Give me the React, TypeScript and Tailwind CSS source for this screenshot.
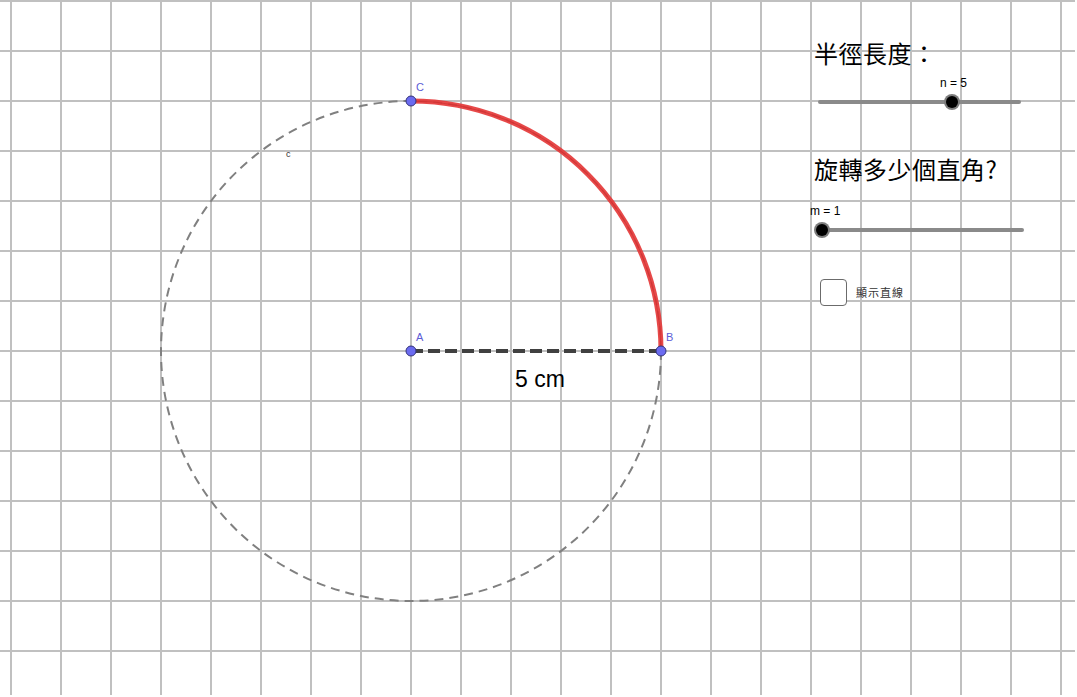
import React from 'react';

const W = 1075;
const H = 695;

const cx = 411;
const cy = 351;
const r = 250;

const pointColor = '#6b6bf0';
const labelColor = '#5c5cd6';

function Grid() {
  const xs: number[] = [];
  for (let x = 11; x < W; x += 50) xs.push(x);
  const ys: number[] = [];
  for (let y = 1; y < H; y += 50) ys.push(y);
  return (
    <g stroke="#c0c0c0" strokeWidth={2}>
      {xs.map((x) => (
        <line key={'v' + x} x1={x} y1={0} x2={x} y2={H} />
      ))}
      {ys.map((y) => (
        <line key={'h' + y} x1={0} y1={y} x2={W} y2={y} />
      ))}
    </g>
  );
}

function Point({ x, y, label }: { x: number; y: number; label: string }) {
  return (
    <g>
      <circle cx={x} cy={y} r={5} fill={pointColor} stroke="#33337a" strokeWidth={1} />
      <text x={x + 5} y={y - 10} fontSize={11} fill={labelColor} fontFamily="Liberation Sans, Arial, sans-serif">
        {label}
      </text>
    </g>
  );
}

function Drawing() {
  const arc = `M ${cx} ${cy - r} A ${r} ${r} 0 0 1 ${cx + r} ${cy}`;
  return (
    <svg width={W} height={H} className="block">
      <rect x={0} y={0} width={W} height={H} fill="#ffffff" />
      <Grid />
      {/* circle c */}
      <circle cx={cx} cy={cy} r={r} fill="none" stroke="#808080" strokeWidth={2} strokeDasharray="9 6" />
      <text x={286} y={157} fontSize={9} fill="#333" fontFamily="Liberation Sans, Arial, sans-serif">
        c
      </text>
      {/* radius AB */}
      <line x1={cx} y1={cy} x2={cx + r} y2={cy} stroke="#404040" strokeWidth={4} strokeDasharray="12 5" />
      <text x={515} y={387} fontSize={23} fill="#000" fontFamily="Liberation Sans, Arial, sans-serif">
        5 cm
      </text>
      {/* rotated arc */}
      <path d={arc} fill="none" stroke="#e53939" strokeWidth={5} strokeOpacity={0.92} />
      <path d={arc} fill="none" stroke="#c42a2a" strokeWidth={1} strokeOpacity={0.5} />
      <Point x={cx} y={cy} label="A" />
      <Point x={cx + r} y={cy} label="B" />
      <Point x={cx} y={cy - r} label="C" />
    </svg>
  );
}

interface SliderProps {
  label: string;
  value: number;
  min: number;
  max: number;
  width: number;
}

function Slider({ label, value, min, max, width }: SliderProps) {
  const knobX = 4 + ((value - min) / (max - min)) * (width - 8);
  return (
    <div className="relative ml-[4px] flex flex-col" style={{ width }}>
      <span
        className="relative text-[12px] leading-[12px] text-black font-['Liberation_Sans',Arial,sans-serif] whitespace-nowrap"
        style={{ left: knobX - 12 }}
      >
        {label}
      </span>
      <div className="relative mt-[5px] h-[16px] flex items-center">
        <div className="w-full h-[4px] rounded-full bg-[#8a8a8a]" />
        <div
          className="absolute top-0 w-[16px] h-[16px] rounded-full bg-[#7d7d7d] flex items-center justify-center"
          style={{ left: knobX - 8 }}
        >
          <div className="w-[12px] h-[12px] rounded-full bg-black" />
        </div>
      </div>
    </div>
  );
}

export default function App() {
  return (
    <div className="relative w-[1077px] h-[697px] bg-white overflow-hidden">
      <Drawing />

      {/* control panel floating on the canvas */}
      <div className="absolute left-[814px] top-[39px] w-[215px] flex flex-col text-black font-['Noto_Sans_CJK_TC','Noto_Sans_CJK_SC',sans-serif]">
        <h2 className="text-[24px] leading-[28px] tracking-[0.5px] font-normal">半徑長度：</h2>
        <div className="mt-[10px]">
          <Slider label="n = 5" value={5} min={1} max={7} width={203} />
        </div>

        <h2 className="mt-[45px] text-[24px] leading-[28px] tracking-[0.5px] font-normal">旋轉多少個直角?</h2>
        <div className="mt-[22px]">
          <Slider label="m = 1" value={1} min={1} max={4} width={206} />
        </div>

        <label className="mt-[41px] ml-[6px] flex items-center gap-[9px]">
          <span className="w-[27px] h-[27px] rounded-[4px] border-[1.5px] border-[#6b6b6b] bg-white" />
          <span className="text-[11px] leading-none text-[#333] tracking-[1px]">顯示直線</span>
        </label>
      </div>
    </div>
  );
}
